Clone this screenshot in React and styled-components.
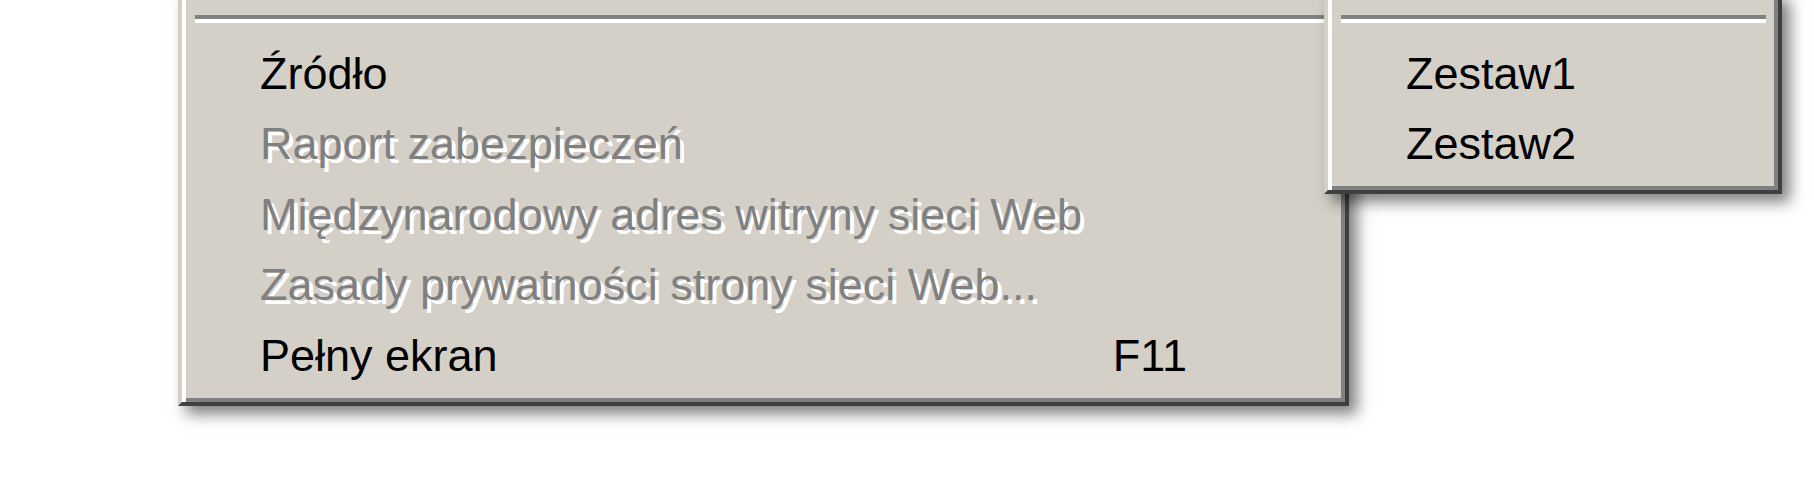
import React from 'react'
import styled, { createGlobalStyle } from 'styled-components'

const GlobalStyle = createGlobalStyle`
  html, body {
    margin: 0;
    padding: 0;
    background: #fff;
  }
`

const Screen = styled.div`
  width: 1814px;
  height: 480px;
  overflow: hidden;
  background: #fff;
  padding-left: 178px;
  box-sizing: border-box;
  font-family: "Liberation Sans", Arial, sans-serif;
`

const MenuStack = styled.div`
  position: relative;
  width: 1171px;
  margin-top: -8px;
`

const Menu = styled.div`
  box-sizing: border-box;
  width: ${p => p.$width}px;
  background: #d4d0c8;
  border: 4px solid;
  border-color: #d4d0c8 #404040 #404040 #d4d0c8;
  padding: 4px 4px 10px 4px;
  box-shadow:
    inset 4px 4px 0 #fff,
    inset -4px -4px 0 #808080,
    8px 8px 14px rgba(0, 0, 0, 0.5);
`

const Flyout = styled(Menu)`
  position: absolute;
  top: 0;
  left: 1146px;
  z-index: 2;
`

const Separator = styled.div`
  padding: 14.7px 8px 15.9px 9px;
`

const SeparatorLine = styled.div`
  height: 0;
  border-top: 4.3px solid #808080;
  border-bottom: 4.3px solid #fff;
`

const Item = styled.div`
  display: flex;
  justify-content: space-between;
  height: 70.6px;
  line-height: 70.6px;
  padding: 0 154px 0 74px;
  font-size: 45px;
  white-space: nowrap;
  color: ${p => (p.$disabled ? '#808080' : '#000')};
  text-shadow: ${p => (p.$disabled ? '4px 4px 0 #fff' : 'none')};
`

const Shortcut = styled.span`
  font-size: 45px;
`

const mainItems = [
  { label: 'Źródło' },
  { label: 'Raport zabezpieczeń', disabled: true },
  { label: 'Międzynarodowy adres witryny sieci Web', disabled: true },
  { label: 'Zasady prywatności strony sieci Web...', disabled: true },
  { label: 'Pełny ekran', shortcut: 'F11' },
]

const subItems = ['Zestaw1', 'Zestaw2']

const App = () => (
  <>
    <GlobalStyle />
    <Screen>
      <MenuStack>
        <Menu $width={1171}>
          <Separator>
            <SeparatorLine />
          </Separator>
          {mainItems.map(item => (
            <Item key={item.label} $disabled={item.disabled}>
              <span>{item.label}</span>
              {item.shortcut && <Shortcut>{item.shortcut}</Shortcut>}
            </Item>
          ))}
        </Menu>
        <Flyout $width={458}>
          <Separator>
            <SeparatorLine />
          </Separator>
          {subItems.map(label => (
            <Item key={label}>
              <span>{label}</span>
            </Item>
          ))}
        </Flyout>
      </MenuStack>
    </Screen>
  </>
)

export default App
